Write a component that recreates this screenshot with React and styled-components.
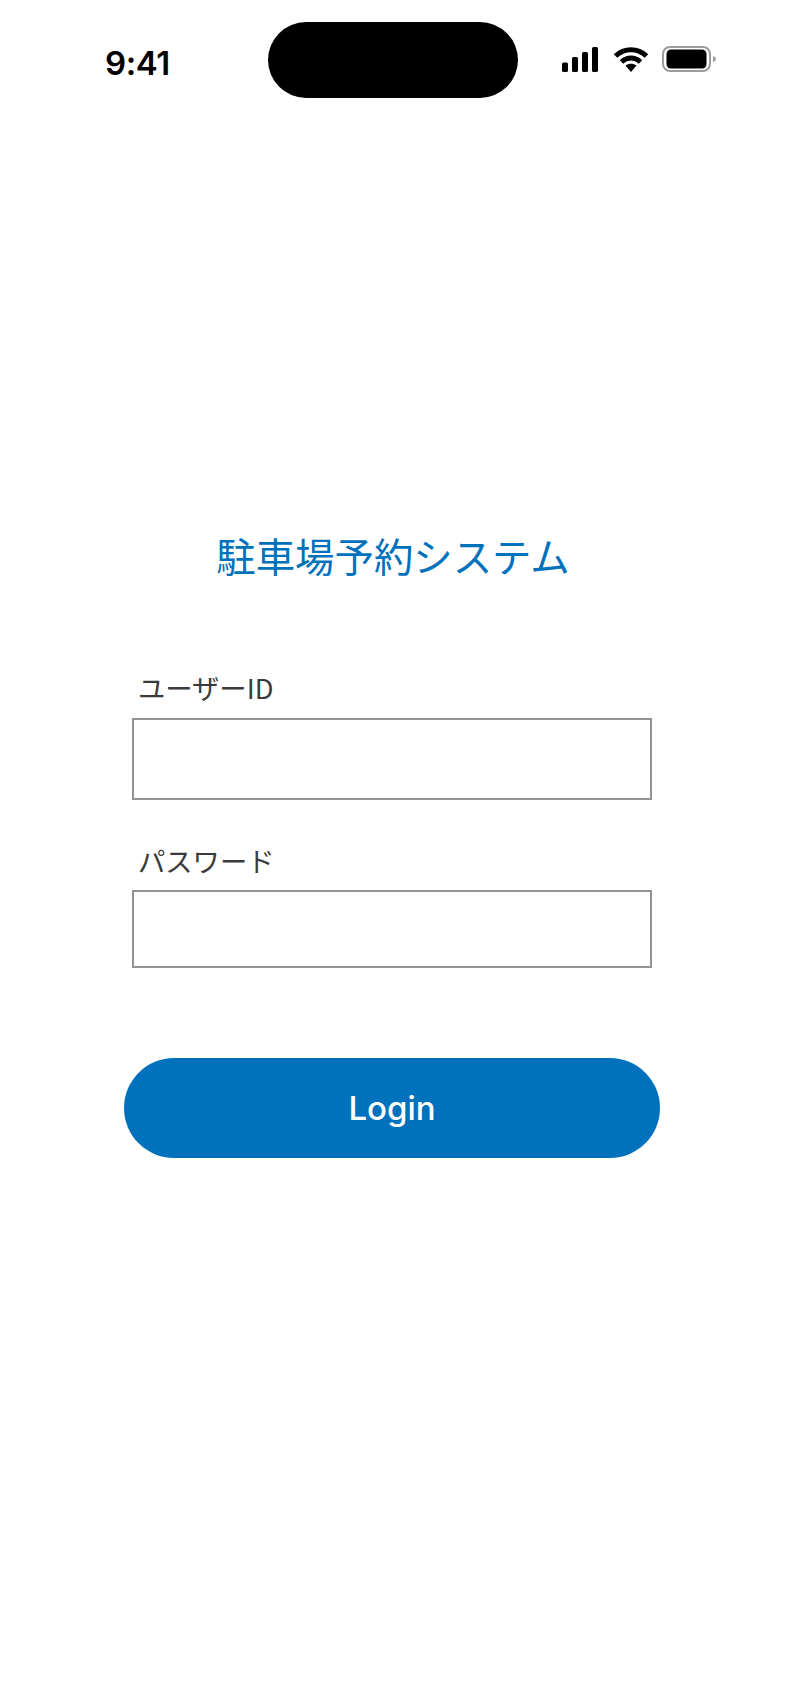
import React from 'react';
import styled, { createGlobalStyle } from 'styled-components';

const GlobalStyle = createGlobalStyle`
  html, body {
    margin: 0;
    padding: 0;
    background: #ffffff;
  }
  * {
    box-sizing: border-box;
  }
`;

const Page = styled.div`
  width: 786px;
  height: 1704px;
  background: #ffffff;
  display: flex;
  flex-direction: column;
  overflow: hidden;
`;

const StatusBar = styled.header`
  height: 98px;
  padding-top: 22px;
  display: flex;
  align-items: center;
`;

const Time = styled.span`
  width: 268px;
  padding-left: 105px;
  padding-top: 6px;
  font-family: Inter, "Liberation Sans", sans-serif;
  font-size: 33px;
  letter-spacing: -0.4px;
  font-weight: 600;
  color: #000000;
`;

const Island = styled.div`
  width: 250px;
  height: 76px;
  border-radius: 38px;
  background: #000000;
`;

const StatusIcons = styled.div`
  display: flex;
  align-items: center;
  gap: 14px;
  padding-left: 44px;
  margin-top: -1.5px;
`;

const Form = styled.form`
  display: flex;
  flex-direction: column;
  align-items: center;
  padding-top: 431px;
`;

const Title = styled.h1`
  margin: 0 0 86px;
  font-family: "Noto Sans CJK JP", sans-serif;
  font-size: 39.4px;
  line-height: 52px;
  font-weight: 400;
  color: #0071bc;
`;

const Fields = styled.div`
  display: flex;
  flex-direction: column;
  align-items: center;
  margin-right: 2px;
`;

const Field = styled.label`
  width: 520px;
  display: flex;
  flex-direction: column;
  margin-bottom: ${(props) => props.$gap}px;
`;

const LabelText = styled.span`
  padding-left: 6px;
  margin-bottom: ${(props) => props.$gap}px;
  font-family: "Noto Sans CJK JP", sans-serif;
  font-size: 27.3px;
  line-height: 40px;
  color: #3a3a3a;
`;

const Input = styled.input`
  display: block;
  width: 100%;
  height: ${(props) => props.$height}px;
  border: 2px solid #939393;
  border-radius: 0;
  background: #ffffff;
  outline: none;
`;

const LoginButton = styled.button`
  width: 536px;
  height: 100px;
  border: none;
  border-radius: 50px;
  background: #0071bc;
  color: #ffffff;
  font-family: Inter, Roboto, sans-serif;
  font-size: 33px;
  font-weight: 550;
`;

function SignalIcon() {
  return (
    <svg width="36" height="25" viewBox="0 0 36 25" fill="#000">
      <rect x="0" y="15.5" width="6" height="9.5" rx="1.6" />
      <rect x="10" y="10" width="6" height="15" rx="1.6" />
      <rect x="20" y="5" width="6" height="20" rx="1.6" />
      <rect x="30" y="0" width="6" height="25" rx="1.6" />
    </svg>
  );
}

function WifiIcon() {
  return (
    <svg width="36" height="25" viewBox="-1.5 0 36 25" fill="none" stroke="#000" strokeWidth="5">
      <path d="M2 9 C10.5 0.5 24.5 0.5 33 9" />
      <path d="M8 15 C13.5 9.8 21.5 9.8 27 15" />
      <path d="M12 18.6 L17.5 25 L23 18.6 C19.5 16 15.5 16 12 18.6 Z" fill="#000" stroke="none" />
    </svg>
  );
}

function BatteryIcon() {
  return (
    <svg width="55" height="26" viewBox="0 0 55 26">
      <rect x="1" y="1" width="47" height="24" rx="7" fill="none" stroke="#9c9c9c" strokeWidth="2" />
      <rect x="4.5" y="3.5" width="40" height="19" rx="4.5" fill="#000" />
      <path d="M51 10 C55 11 55 15 51 16 Z" fill="#a3a3a3" />
    </svg>
  );
}

export default function App() {
  return (
    <Page>
      <GlobalStyle />
      <StatusBar>
        <Time>9:41</Time>
        <Island />
        <StatusIcons>
          <SignalIcon />
          <WifiIcon />
          <BatteryIcon />
        </StatusIcons>
      </StatusBar>
      <Form>
        <Title>駐車場予約システム</Title>
        <Fields>
          <Field $gap={40}>
            <LabelText $gap={11}>ユーザーID</LabelText>
            <Input type="text" $height={82} />
          </Field>
          <Field $gap={90}>
            <LabelText $gap={10}>パスワード</LabelText>
            <Input type="password" $height={78} />
          </Field>
          <LoginButton type="button">Login</LoginButton>
        </Fields>
      </Form>
    </Page>
  );
}
